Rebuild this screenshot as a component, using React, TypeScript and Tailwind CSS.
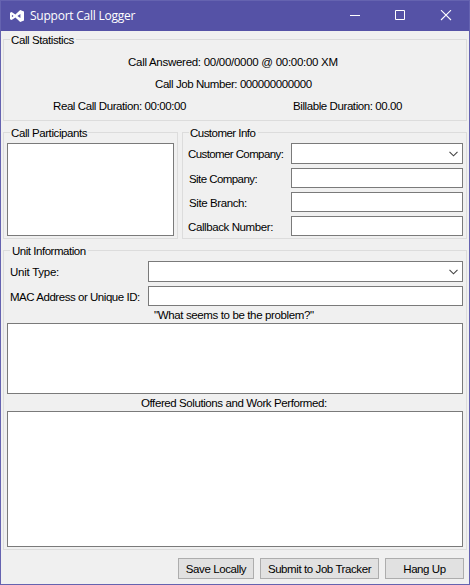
import type { ReactNode } from "react";

function Group({ title, legendClass, className, children }: { title: string; legendClass: string; className: string; children: ReactNode }) {
  return (
    <fieldset className={`border border-[#dcdcdc] ${className}`}>
      <legend className={`ml-[6px] h-[13px] leading-[15px] whitespace-nowrap ${legendClass}`}>{title}</legend>
      {children}
    </fieldset>
  );
}

function Combo() {
  return (
    <div className="flex h-[21px] items-center justify-end border border-[#7a7a7a] bg-white pr-[4px]">
      <svg width="9" height="6" viewBox="0 0 9 6" fill="none" stroke="#444" strokeWidth="1.1">
        <path d="M0.5 0.8 L4.5 4.8 L8.5 0.8" />
      </svg>
    </div>
  );
}

const box = "block border border-[#7a7a7a] bg-white";
const button = "h-[21px] border border-[#adadad] bg-[#e1e1e1] text-center leading-[20px] whitespace-nowrap";

export default function App() {
  return (
    <div className="h-[585px] w-[470px] overflow-hidden border border-[#6563b0] bg-[#f0f0f0] font-['Liberation_Sans',Arial,sans-serif] text-[11.5px] tracking-[-0.41px] whitespace-nowrap text-black">
      <header className="flex h-[30px] items-center bg-[#5552a6] text-white">
        <svg className="ml-[9px]" width="14" height="12" viewBox="0 0 14 12" fill="#fff" fillRule="evenodd">
          <path d="M10.2 0 L14 1.4 V10.6 L10.2 12 L5.4 7.6 L1.6 10 L0 9.3 V2.7 L1.6 2 L5.4 4.4 Z M1.9 4.7 V7.3 L3.6 6 Z M10.4 3.9 L7.4 6 L10.4 8.1 Z" />
        </svg>
        <h1 className="ml-[6px] w-[250px] font-['Open_Sans','Noto_Sans',sans-serif] text-[12px] leading-[30px] tracking-[-0.24px]">Support Call Logger</h1>
        <svg className="mr-[17px] ml-auto" width="102" height="12" viewBox="0 0 102 12" fill="none" stroke="#fff">
          <path d="M0 5.5 H10" />
          <path d="M45.5 0.5 h9 v9 h-9 Z" />
          <path d="M91 0.2 l10 9.8 M101 0.2 l-10 9.8" strokeWidth="1.1" />
        </svg>
      </header>
      <main className="px-[2px] pt-[2px]">
        <Group title="Call Statistics" legendClass="w-[66px] pl-[1px]" className="h-[88px] w-[464px]">
          <p className="mt-[9px] pl-[124px] leading-[15px] tracking-[-0.28px]">Call Answered: 00/00/0000 @ 00:00:00 XM</p>
          <p className="mt-[7px] pl-[151px] leading-[15px] tracking-[-0.42px]">Call Job Number: 000000000000</p>
          <div className="mt-[7px] flex pl-[49px] leading-[15px]">
            <p className="w-[240px]">Real Call Duration: 00:00:00</p>
            <p>Billable Duration: 00.00</p>
          </div>
        </Group>
        <div className="mt-[5px] flex gap-[4px]">
          <Group title="Call Participants" legendClass="w-[78px] pl-[1px]" className="h-[113px] w-[175px]">
            <div className={`${box} mt-[4px] ml-[3px] h-[93px] w-[167px]`} />
          </Group>
          <Group title="Customer Info" legendClass="w-[69px] pl-[1px] tracking-[-0.53px]" className="h-[113px] w-[285px]">
            <div className="mt-[4px] grid grid-cols-[103px_172px] gap-y-[4px] pl-[5px] leading-[23px]">
              <span className="h-[21px] tracking-[-0.6px]">Customer Company:</span>
              <Combo />
              <span className="h-[20px] pl-[1px] tracking-[-0.57px]">Site Company:</span>
              <div className={`${box} h-[20px]`} />
              <span className="h-[20px] pl-[1px] tracking-[-0.4px]">Site Branch:</span>
              <div className={`${box} h-[20px]`} />
              <span className="h-[20px] tracking-[-0.4px]">Callback Number:</span>
              <div className={`${box} h-[20px]`} />
            </div>
          </Group>
        </div>
        <Group title="Unit Information" legendClass="w-[78px] pl-[2px] tracking-[-0.47px]" className="mt-[5px] h-[306px] w-[464px]">
          <div className="mt-[4px] grid grid-cols-[138px_315px] gap-y-[4px] pl-[6px] leading-[23px]">
            <span className="h-[21px] tracking-[-0.25px]">Unit Type:</span>
            <Combo />
            <span className="h-[20px] tracking-[-0.46px]">MAC Address or Unique ID:</span>
            <div className={`${box} h-[20px]`} />
          </div>
          <p className="h-[17px] pl-[150px] leading-[19px] tracking-[-0.37px]">"What seems to be the problem?"</p>
          <div className={`${box} ml-[3px] h-[71px] w-[456px]`} />
          <p className="h-[17px] pl-[137px] leading-[19px]">Offered Solutions and Work Performed:</p>
          <div className={`${box} ml-[3px] h-[136px] w-[456px]`} />
        </Group>
        <div className="mt-[8px] flex gap-[6px] pl-[175px]">
          <button className={`${button} w-[76px]`}>Save Locally</button>
          <button className={`${button} w-[119px]`}>Submit to Job Tracker</button>
          <button className={`${button} w-[79px]`}>Hang Up</button>
        </div>
      </main>
    </div>
  );
}
